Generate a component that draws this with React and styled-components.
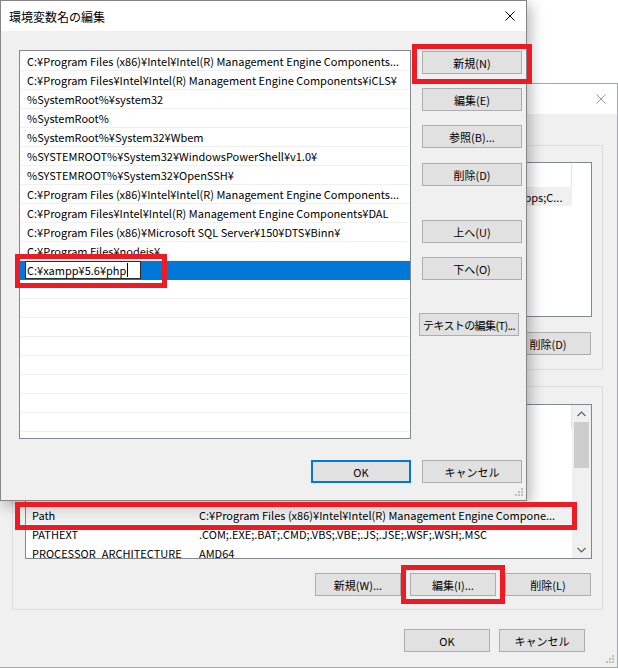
import React from 'react';
import styled, { createGlobalStyle } from 'styled-components';

const GlobalStyle = createGlobalStyle`
  * { box-sizing: border-box; }
  body { margin: 0; background: #fff; }
`;

const UI_FONT = `"Noto Sans CJK JP", "Noto Sans", sans-serif`;

const Desktop = styled.div`
  position: relative;
  width: 618px;
  height: 669px;
  overflow: hidden;
  background: #fff;
  font-family: ${UI_FONT};
  font-size: 11px;
  color: #000;
`;

// 画面上のウィンドウ（重なりがそのまま内容なので絶対配置）
const Window = styled.div`
  position: absolute;
  left: ${(p) => p.$x}px;
  top: ${(p) => p.$y}px;
  width: ${(p) => p.$w}px;
  height: ${(p) => p.$h}px;
  display: flex;
  flex-direction: column;
  background: #f0f0f0;
  border: 1px solid ${(p) => p.$border};
  box-shadow: ${(p) => p.$shadow || 'none'};
  z-index: ${(p) => p.$z || 0};
`;

const TitleBar = styled.div`
  flex: none;
  height: 30px;
  display: flex;
  align-items: center;
  justify-content: space-between;
  padding: 0 11px 0 8px;
  background: #fff;
  font-size: 12px;
  white-space: nowrap;
`;

const CloseIcon = ({ color }) => (
  <svg width="10" height="10" viewBox="0 0 10 10">
    <path d="M0.5 0.5L9.5 9.5M9.5 0.5L0.5 9.5" stroke={color} strokeWidth="1" />
  </svg>
);

const Grip = styled.svg`
  position: absolute;
  right: 3px;
  bottom: 2px;
`;

const ResizeGrip = () => (
  <Grip width="10" height="10" viewBox="0 0 10 10">
    {[
      [8, 0],
      [5, 3],
      [8, 3],
      [2, 6],
      [5, 6],
      [8, 6],
    ].map(([x, y]) => (
      <rect key={`${x}-${y}`} x={x} y={y} width="2" height="2" fill="#bfbfbf" />
    ))}
  </Grip>
);

const Button = styled.button`
  flex: none;
  width: ${(p) => p.$w || 100}px;
  height: 23px;
  margin: ${(p) => p.$mt || 0}px 0 0 ${(p) => p.$ml || 0}px;
  padding: 0;
  background: #e1e1e1;
  border: ${(p) => (p.$default ? '2px solid #0078d7' : '1px solid #adadad')};
  font: inherit;
  letter-spacing: ${(p) => (p.$tight ? '-0.6px' : 'normal')};
  color: #000;
  white-space: nowrap;
`;

/* ---------- 環境変数名の編集 ---------- */

const EditBody = styled.div`
  display: grid;
  grid-template-columns: 392px 100px;
  column-gap: 11px;
  padding: 19px 0 0 18px;
`;

const PathList = styled.div`
  height: 389px;
  padding-top: 1px;
  overflow: hidden;
  background: #fff;
  border: 1px solid #828790;
`;

const PathRow = styled.div`
  height: 19px;
  display: flex;
  align-items: center;
  padding-left: ${(p) => (p.$editing ? 5 : 7)}px;
  white-space: nowrap;
  overflow: hidden;
  background: ${(p) => (p.$editing ? '#0078d7' : '#fff')};
  border-bottom: 1px solid ${(p) => (p.$editing ? '#0078d7' : '#f0f0f0')};
`;

const EditBox = styled.div`
  align-self: stretch;
  width: 116px;
  display: flex;
  align-items: center;
  padding-left: 1px;
  background: #fff;
  border: 1px solid #2b2b2b;
`;

const Caret = styled.span`
  width: 1px;
  height: 14px;
  margin-left: 1px;
  background: #000;
`;

const SideButtons = styled.div`
  display: flex;
  flex-direction: column;
  align-items: flex-start;
`;

const DialogFooter = styled.div`
  grid-column: 1 / -1;
  display: flex;
  justify-content: flex-end;
  gap: ${(p) => p.$gap}px;
  margin-top: ${(p) => p.$mt}px;
`;

/* ---------- 環境変数（奥のウィンドウ） ---------- */

const EnvBody = styled.div`
  display: flex;
  flex-direction: column;
  padding: 0 14px 0 24px;
`;

const GroupBox = styled.div`
  margin-top: ${(p) => p.$mt}px;
  padding: ${(p) => p.$pt}px 10px ${(p) => p.$pb}px 12px;
  border: 1px solid #dcdcdc;
`;

const ListView = styled.div`
  height: 155px;
  display: flex;
  overflow: hidden;
  background: #fff;
  border: 1px solid #828790;
`;

const ListColumns = styled.div`
  flex: 1;
  min-width: 0;
`;

const ListHeader = styled.div`
  height: 24px;
  display: grid;
  grid-template-columns: 168px 378px;
  align-items: center;
`;

const HeaderCell = styled.div`
  height: 100%;
  display: flex;
  align-items: center;
  padding-left: 6px;
  border-right: 1px solid #e5e5e5;
`;

const DataRow = styled.div`
  width: 546px;
  height: 19px;
  display: grid;
  grid-template-columns: 168px 378px;
  align-items: center;
  background: ${(p) => (p.$selected ? '#f0f0f0' : 'transparent')};
`;

const Cell = styled.div`
  padding: 0 4px 0 ${(p) => (p.$value ? 5 : 6)}px;
  white-space: nowrap;
  overflow: hidden;
`;

const ScrollBar = styled.div`
  flex: none;
  width: 19px;
  display: flex;
  flex-direction: column;
  background: ${(p) => (p.$blank ? '#fff' : '#f0f0f0')};
`;

const ScrollArrow = styled.div`
  height: 17px;
  display: flex;
  align-items: center;
  justify-content: center;
  margin-top: ${(p) => (p.$down ? 'auto' : '0')};
`;

const ScrollThumb = styled.div`
  height: 46px;
  margin: 0 2px;
  background: #cdcdcd;
`;

const Chevron = ({ down }) => (
  <svg width="9" height="6" viewBox="0 0 9 6">
    <path
      d={down ? 'M0.5 1L4.5 5L8.5 1' : 'M0.5 5L4.5 1L8.5 5'}
      stroke="#606060"
      strokeWidth="1.2"
      fill="none"
    />
  </svg>
);

const ButtonRow = styled.div`
  display: flex;
  justify-content: flex-end;
  gap: 9px;
  margin-top: ${(p) => p.$mt}px;
  padding-right: ${(p) => p.$pr || 0}px;
`;

// 説明用の赤い枠
const Highlight = styled.div`
  position: absolute;
  left: ${(p) => p.$x}px;
  top: ${(p) => p.$y}px;
  width: ${(p) => p.$w}px;
  height: ${(p) => p.$h}px;
  border: 5px solid #ec1c24;
  z-index: 10;
  pointer-events: none;
`;

const paths = [
  'C:¥Program Files (x86)¥Intel¥Intel(R) Management Engine Components...',
  'C:¥Program Files¥Intel¥Intel(R) Management Engine Components¥iCLS¥',
  '%SystemRoot%¥system32',
  '%SystemRoot%',
  '%SystemRoot%¥System32¥Wbem',
  '%SYSTEMROOT%¥System32¥WindowsPowerShell¥v1.0¥',
  '%SYSTEMROOT%¥System32¥OpenSSH¥',
  'C:¥Program Files (x86)¥Intel¥Intel(R) Management Engine Components...',
  'C:¥Program Files¥Intel¥Intel(R) Management Engine Components¥DAL',
  'C:¥Program Files (x86)¥Microsoft SQL Server¥150¥DTS¥Binn¥',
  'C:¥Program Files¥nodejs¥',
];

const userVars = [
  { name: 'Path', value: 'C:¥Python¥;C:¥Users¥aki¥AppData¥Local¥Microsoft¥WindowsApps;C...', selected: true },
  { name: 'TEMP', value: '%USERPROFILE%¥AppData¥Local¥Temp' },
  { name: 'TMP', value: '%USERPROFILE%¥AppData¥Local¥Temp' },
];

const systemVars = [
  { name: 'ComSpec', value: 'C:¥WINDOWS¥system32¥cmd.exe' },
  { name: 'DriverData', value: 'C:¥Windows¥System32¥Drivers¥DriverData' },
  { name: 'NUMBER_OF_PROCESSORS', value: '8' },
  { name: 'OS', value: 'Windows_NT' },
  { name: 'Path', value: 'C:¥Program Files (x86)¥Intel¥Intel(R) Management Engine Compone...', selected: true },
  { name: 'PATHEXT', value: '.COM;.EXE;.BAT;.CMD;.VBS;.VBE;.JS;.JSE;.WSF;.WSH;.MSC' },
  { name: 'PROCESSOR_ARCHITECTURE', value: 'AMD64' },
];

function VarList({ rows, scroll }) {
  return (
    <ListView>
      <ListColumns>
        <ListHeader>
          <HeaderCell>変数</HeaderCell>
          <HeaderCell>値</HeaderCell>
        </ListHeader>
        {rows.map((r) => (
          <DataRow key={r.name} $selected={r.selected}>
            <Cell>{r.name}</Cell>
            <Cell $value>{r.value}</Cell>
          </DataRow>
        ))}
      </ListColumns>
      {scroll ? (
        <ScrollBar>
          <ScrollArrow>
            <Chevron />
          </ScrollArrow>
          <ScrollThumb />
          <ScrollArrow $down>
            <Chevron down />
          </ScrollArrow>
        </ScrollBar>
      ) : (
        <ScrollBar $blank />
      )}
    </ListView>
  );
}

export default function App() {
  return (
    <Desktop>
      <GlobalStyle />

      <Window $x={-13} $y={83} $w={631} $h={585} $border="#a3a9b3">
        <TitleBar>
          <span>環境変数</span>
          <CloseIcon color="#9a9a9a" />
        </TitleBar>
        <EnvBody>
          <GroupBox $mt={31} $pt={16} $pb={14}>
            <VarList rows={userVars} />
            <ButtonRow $mt={15} $pr={1}>
              <Button $w={86}>新規(N)...</Button>
              <Button $w={86}>編集(E)...</Button>
              <Button $w={86}>削除(D)</Button>
            </ButtonRow>
          </GroupBox>
          <GroupBox $mt={16} $pt={17} $pb={13}>
            <VarList rows={systemVars} scroll />
            <ButtonRow $mt={14} $pr={1}>
              <Button $w={86}>新規(W)...</Button>
              <Button $w={86}>編集(I)...</Button>
              <Button $w={86}>削除(L)</Button>
            </ButtonRow>
          </GroupBox>
          <ButtonRow $mt={19} $pr={18}>
            <Button $w={86}>OK</Button>
            <Button $w={86}>キャンセル</Button>
          </ButtonRow>
        </EnvBody>
        <ResizeGrip />
      </Window>

      <Window
        $x={0}
        $y={0}
        $w={527}
        $h={501}
        $z={2}
        $border="#858585"
        $shadow="3px 4px 14px rgba(0, 0, 0, 0.3)"
      >
        <TitleBar>
          <span>環境変数名の編集</span>
          <CloseIcon color="#000" />
        </TitleBar>
        <EditBody>
          <PathList>
            {paths.map((p, i) => (
              <PathRow key={i}>{p}</PathRow>
            ))}
            <PathRow $editing>
              <EditBox>
                C:¥xampp¥5.6¥php
                <Caret />
              </EditBox>
            </PathRow>
            {Array.from({ length: 9 }, (_, i) => (
              <PathRow key={`empty-${i}`} />
            ))}
          </PathList>
          <SideButtons>
            <Button $mt={1}>新規(N)</Button>
            <Button $mt={14}>編集(E)</Button>
            <Button $mt={14}>参照(B)...</Button>
            <Button $mt={15}>削除(D)</Button>
            <Button $mt={34}>上へ(U)</Button>
            <Button $mt={14}>下へ(O)</Button>
            <Button $mt={33} $ml={-3} $tight>テキストの編集(T)...</Button>
          </SideButtons>
          <DialogFooter $gap={11} $mt={21}>
            <Button $default>OK</Button>
            <Button>キャンセル</Button>
          </DialogFooter>
        </EditBody>
        <ResizeGrip />
      </Window>

      <Highlight $x={412} $y={44} $w={120} $h={40} />
      <Highlight $x={15} $y={254} $w={152} $h={34} />
      <Highlight $x={15} $y={502} $w={562} $h={28} />
      <Highlight $x={401} $y={565} $w={104} $h={39} />
    </Desktop>
  );
}
